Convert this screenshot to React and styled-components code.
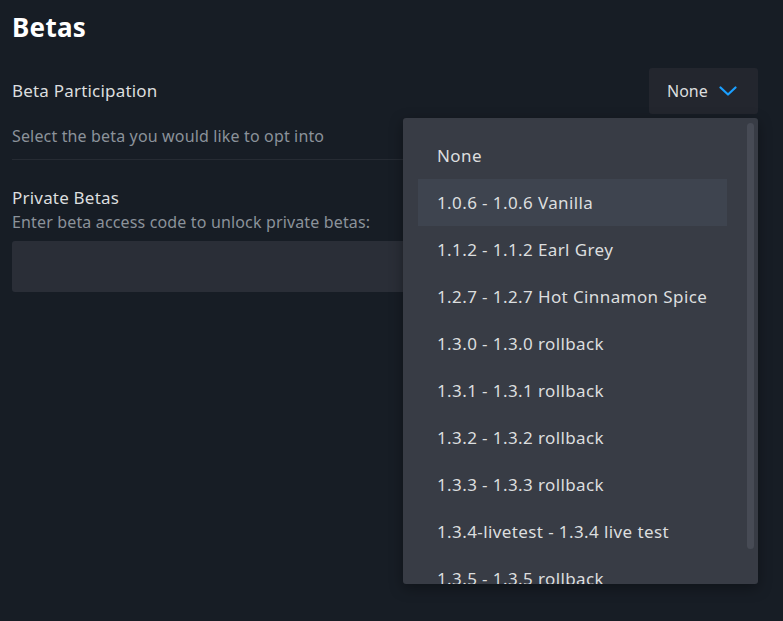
import React from 'react';
import styled, { createGlobalStyle } from 'styled-components';

const GlobalStyle = createGlobalStyle`
  html, body {
    margin: 0;
    background: #171d25;
  }
  body {
    font-family: "Noto Sans", "Open Sans", Arial, sans-serif;
    color: #dcdedf;
  }
`;

const betas = [
  'None',
  '1.0.6 - 1.0.6 Vanilla',
  '1.1.2 - 1.1.2 Earl Grey',
  '1.2.7 - 1.2.7 Hot Cinnamon Spice',
  '1.3.0 - 1.3.0 rollback',
  '1.3.1 - 1.3.1 rollback',
  '1.3.2 - 1.3.2 rollback',
  '1.3.3 - 1.3.3 rollback',
  '1.3.4-livetest - 1.3.4 live test',
  '1.3.5 - 1.3.5 rollback',
];

function Chevron() {
  return (
    <svg width="18" height="10" viewBox="0 0 18 10" fill="none">
      <path d="M1.5 1.5 L9 8.5 L16.5 1.5" stroke="#1a9fff" strokeWidth="2.2" strokeLinecap="round" strokeLinejoin="round" />
    </svg>
  );
}

function App() {
  return (
    <Page>
      <GlobalStyle />
      <Title>Betas</Title>
      <FieldRow>
        <Label>Beta Participation</Label>
        <DropdownWrap>
          <DropdownButton>
            <span>None</span>
            <Chevron />
          </DropdownButton>
          <Menu>
            {betas.map((b, i) => (
              <MenuItem key={b} active={i === 1}>{b}</MenuItem>
            ))}
            <ScrollThumb />
          </Menu>
        </DropdownWrap>
      </FieldRow>
      <Description>Select the beta you would like to opt into</Description>
      <Divider />
      <Section>
        <Label>Private Betas</Label>
        <Description tight>Enter beta access code to unlock private betas:</Description>
        <CodeInput />
      </Section>
    </Page>
  );
}

const Page = styled.div`
  padding: 9px 25px 0 12px;
  min-height: 621px;
  box-sizing: border-box;
`;

const Title = styled.h1`
  margin: 0;
  font-size: 26px;
  line-height: 36px;
  font-weight: 700;
  letter-spacing: 0.3px;
  color: #ffffff;
`;

const FieldRow = styled.div`
  display: flex;
  align-items: center;
  justify-content: space-between;
  margin-top: 23px;
`;

const Label = styled.div`
  font-size: 17px;
  line-height: 22px;
  letter-spacing: 0.2px;
  color: #dcdedf;
`;

const DropdownWrap = styled.div`
  position: relative;
`;

const DropdownButton = styled.div`
  display: flex;
  align-items: center;
  gap: 11px;
  width: 109px;
  height: 46px;
  box-sizing: border-box;
  padding: 0 0 0 18px;
  background: #23262e;
  border-radius: 3px;
  font-size: 16px;
  color: #dcdedf;
`;

const Menu = styled.div`
  position: absolute;
  top: 50px;
  right: 0;
  width: 355px;
  height: 466px;
  box-sizing: border-box;
  padding: 14px 31px 0 15px;
  background: #383c45;
  border-radius: 3px;
  overflow: hidden;
  z-index: 10;
  box-shadow: 0 4px 14px rgba(0, 0, 0, 0.35);
`;

const MenuItem = styled.div`
  height: 47px;
  display: flex;
  align-items: center;
  padding-left: 19px;
  font-size: 17px;
  letter-spacing: 0.4px;
  color: #dcdedf;
  background: ${(p) => (p.active ? '#3e444f' : 'transparent')};
  white-space: nowrap;
`;

const ScrollThumb = styled.div`
  position: absolute;
  top: 5px;
  right: 4px;
  width: 7px;
  height: 426px;
  border-radius: 4px;
  background: #474b55;
`;

const Description = styled.div`
  font-size: 16px;
  line-height: 22px;
  letter-spacing: 0.15px;
  color: #8b929a;
  margin-top: ${(p) => (p.tight ? '2px' : '11px')};
`;

const Divider = styled.div`
  height: 1px;
  background: #262b33;
  margin-top: 12px;
`;

const Section = styled.div`
  margin-top: 27px;
`;

const CodeInput = styled.div`
  height: 51px;
  margin-top: 8px;
  background: #2a2e37;
  border-radius: 3px;
`;

export default App;
